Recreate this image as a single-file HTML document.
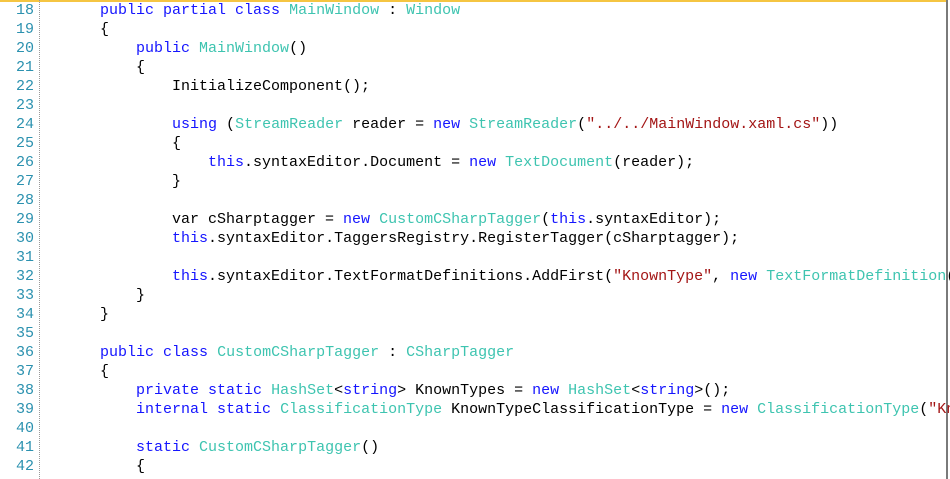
<!DOCTYPE html>
<html><head><meta charset="utf-8"><style>
html,body{margin:0;padding:0;background:#fff;width:950px;height:479px;overflow:hidden}
#top{position:absolute;left:0;top:0;width:947px;height:2px;background:#f5c542}
#right{position:absolute;left:946px;top:0;width:2px;height:479px;background:#7a7a7a}
#sep{position:absolute;left:39px;top:0;height:479px;border-left:1px dotted #999}
.l{position:absolute;left:0;height:19px;line-height:19px;font-family:"Liberation Mono",monospace;font-size:15px;white-space:pre;color:#000}
.n{display:inline-block;width:34px;text-align:right;color:#2b91af}
.c{position:absolute;left:64px;top:0}
.k{color:#1515ff}.t{color:#3ec4b0}.s{color:#a31515}
</style></head><body>
<div id="top"></div><div id="right"></div><div id="sep"></div>
<div class="l" style="top:1px"><span class="n">18</span><span class="c">    <span class="k">public partial class</span> <span class="t">MainWindow</span> : <span class="t">Window</span></span></div>
<div class="l" style="top:20px"><span class="n">19</span><span class="c">    {</span></div>
<div class="l" style="top:39px"><span class="n">20</span><span class="c">        <span class="k">public</span> <span class="t">MainWindow</span>()</span></div>
<div class="l" style="top:58px"><span class="n">21</span><span class="c">        {</span></div>
<div class="l" style="top:77px"><span class="n">22</span><span class="c">            InitializeComponent();</span></div>
<div class="l" style="top:96px"><span class="n">23</span><span class="c"></span></div>
<div class="l" style="top:115px"><span class="n">24</span><span class="c">            <span class="k">using</span> (<span class="t">StreamReader</span> reader = <span class="k">new</span> <span class="t">StreamReader</span>(<span class="s">"../../MainWindow.xaml.cs"</span>))</span></div>
<div class="l" style="top:134px"><span class="n">25</span><span class="c">            {</span></div>
<div class="l" style="top:153px"><span class="n">26</span><span class="c">                <span class="k">this</span>.syntaxEditor.Document = <span class="k">new</span> <span class="t">TextDocument</span>(reader);</span></div>
<div class="l" style="top:172px"><span class="n">27</span><span class="c">            }</span></div>
<div class="l" style="top:191px"><span class="n">28</span><span class="c"></span></div>
<div class="l" style="top:210px"><span class="n">29</span><span class="c">            var cSharptagger = <span class="k">new</span> <span class="t">CustomCSharpTagger</span>(<span class="k">this</span>.syntaxEditor);</span></div>
<div class="l" style="top:229px"><span class="n">30</span><span class="c">            <span class="k">this</span>.syntaxEditor.TaggersRegistry.RegisterTagger(cSharptagger);</span></div>
<div class="l" style="top:248px"><span class="n">31</span><span class="c"></span></div>
<div class="l" style="top:267px"><span class="n">32</span><span class="c">            <span class="k">this</span>.syntaxEditor.TextFormatDefinitions.AddFirst(<span class="s">"KnownType"</span>, <span class="k">new</span> <span class="t">TextFormatDefinition</span>(</span></div>
<div class="l" style="top:286px"><span class="n">33</span><span class="c">        }</span></div>
<div class="l" style="top:305px"><span class="n">34</span><span class="c">    }</span></div>
<div class="l" style="top:324px"><span class="n">35</span><span class="c"></span></div>
<div class="l" style="top:343px"><span class="n">36</span><span class="c">    <span class="k">public class</span> <span class="t">CustomCSharpTagger</span> : <span class="t">CSharpTagger</span></span></div>
<div class="l" style="top:362px"><span class="n">37</span><span class="c">    {</span></div>
<div class="l" style="top:381px"><span class="n">38</span><span class="c">        <span class="k">private static</span> <span class="t">HashSet</span>&lt;<span class="k">string</span>&gt; KnownTypes = <span class="k">new</span> <span class="t">HashSet</span>&lt;<span class="k">string</span>&gt;();</span></div>
<div class="l" style="top:400px"><span class="n">39</span><span class="c">        <span class="k">internal static</span> <span class="t">ClassificationType</span> KnownTypeClassificationType = <span class="k">new</span> <span class="t">ClassificationType</span>(<span class="s">"Kn</span></span></div>
<div class="l" style="top:419px"><span class="n">40</span><span class="c"></span></div>
<div class="l" style="top:438px"><span class="n">41</span><span class="c">        <span class="k">static</span> <span class="t">CustomCSharpTagger</span>()</span></div>
<div class="l" style="top:457px"><span class="n">42</span><span class="c">        {</span></div>
</body></html>
